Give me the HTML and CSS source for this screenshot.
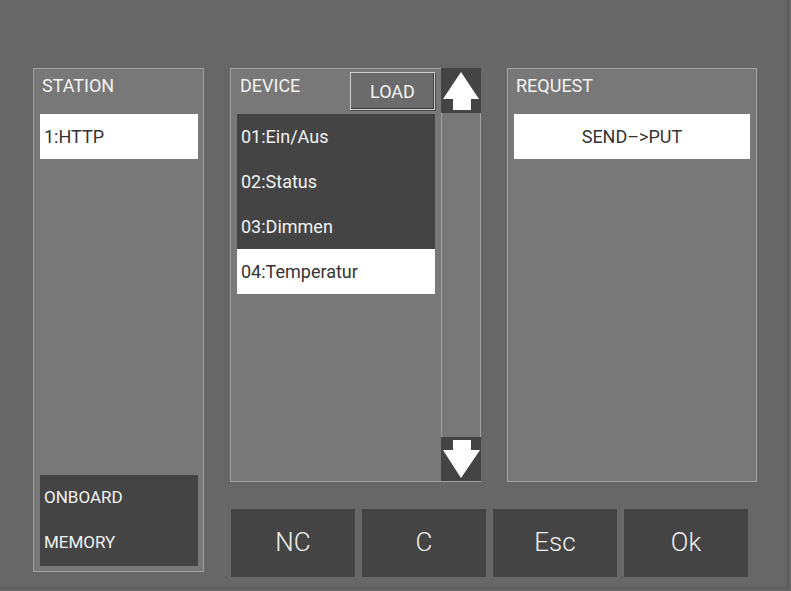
FILE: index.html
```html
<!DOCTYPE html>
<html>
<head>
<meta charset="utf-8">
<link rel="stylesheet" href="styles.css">
</head>
<body>
<div class="screen">
  <div class="station panel">
    <div class="title">STATION</div>
    <div class="item light">1:HTTP</div>
    <div class="spacer"></div>
    <div class="memory">
      <div class="mem-line">ONBOARD</div>
      <div class="mem-line">MEMORY</div>
    </div>
  </div>
  <div class="right">
    <div class="panels">
      <div class="device">
        <div class="dev-main">
          <div class="dev-head">
            <div class="title">DEVICE</div>
            <div class="load">LOAD</div>
          </div>
          <div class="list">
            <div class="item dark">01:Ein/Aus</div>
            <div class="item dark">02:Status</div>
            <div class="item dark">03:Dimmen</div>
            <div class="item light">04:Temperatur</div>
          </div>
        </div>
        <div class="scroll">
          <div class="arrow up">
            <svg width="40" height="45" viewBox="0 0 40 45"><polygon points="20,4 38,31 30,31 30,42 12,42 12,31 2,31" fill="#fff"/></svg>
          </div>
          <div class="track"></div>
          <div class="arrow down">
            <svg width="40" height="44" viewBox="0 0 40 44"><polygon points="12,3 30,3 30,13 39,13 20,41 2,13 12,13" fill="#fff"/></svg>
          </div>
        </div>
      </div>
      <div class="request panel">
        <div class="title">REQUEST</div>
        <div class="item light center">SEND–&gt;PUT</div>
      </div>
    </div>
    <div class="buttons">
      <div class="btn">NC</div>
      <div class="btn">C</div>
      <div class="btn">Esc</div>
      <div class="btn">Ok</div>
    </div>
  </div>
</div>
</body>
</html>
```

FILE: styles.css
```css
* { box-sizing: border-box; }
html, body { margin: 0; padding: 0; }
body {
  background: #676767;
  font-family: Roboto, "Liberation Sans", sans-serif;
  color: #f2f2f2;
  width: 791px;
  height: 591px;
  overflow: hidden;
}
.screen {
  width: 789px;
  height: 589px;
  border-right: 2px solid #5d5d5d;
  border-bottom: 2px solid #5d5d5d;
  padding: 68px 0 0 33px;
  display: flex;
  gap: 26px;
}
.panel {
  background: #787878;
  border: 1px solid #a2a2a2;
}
.title {
  font-size: 18px;
  line-height: 22px;
  color: #f4f4f4;
}
.station {
  width: 171px;
  height: 504px;
  display: flex;
  flex-direction: column;
  padding: 6px 5px 5px 6px;
}
.station .title { padding-left: 2px; margin-bottom: 17px; }
.item {
  height: 45px;
  line-height: 45px;
  font-size: 18px;
  padding-left: 4px;
  white-space: nowrap;
}
.item.light { background: #ffffff; color: #333333; }
.item.dark { background: #444444; color: #f2f2f2; }
.item.center { text-align: center; padding-left: 0; }
.spacer { flex: 1; }
.memory {
  background: #444444;
  height: 91px;
  padding-left: 4px;
}
.mem-line {
  font-size: 17px;
  line-height: 45px;
  color: #f2f2f2;
}
.right {
  display: flex;
  flex-direction: column;
}
.panels {
  display: flex;
  gap: 26px;
  height: 414px;
}
.device {
  display: flex;
  width: 251px;
}
.dev-main {
  width: 211px;
  background: #787878;
  border: 1px solid #a2a2a2;
  border-right: none;
  padding: 3px 6px 0 6px;
}
.dev-head {
  display: flex;
  justify-content: space-between;
  align-items: flex-start;
  height: 42px;
}
.dev-head .title { padding-left: 3px; padding-top: 3px; }
.load {
  width: 85px;
  height: 38px;
  margin-right: 0;
  background: #6b6b6b;
  border: 1px solid #cfcfcf;
  box-shadow: inset -1px -1px 0 #3e3e3e, 1px 1px 0 #4a4a4a;
  font-size: 18px;
  line-height: 38px;
  text-align: center;
  color: #f4f4f4;
}
.list { width: 198px; }
.scroll {
  width: 40px;
  display: flex;
  flex-direction: column;
  background: #787878;
  border: 1px solid #a2a2a2;
}
.arrow {
  background: #444444;
  margin: 0 -1px;
  display: flex;
}
.arrow.up { height: 45px; margin-top: -1px; }
.arrow.down { height: 44px; }
.arrow svg { display: block; }
.track { flex: 1; }
.request {
  width: 250px;
  padding: 6px 6px 0 6px;
}
.request .title { padding-left: 2px; margin-bottom: 17px; }
.buttons {
  display: flex;
  gap: 7px;
  margin-top: 27px;
  margin-left: 1px;
}
.btn {
  width: 124px;
  height: 68px;
  background: #444444;
  font-size: 26px;
  font-weight: 300;
  line-height: 66px;
  text-align: center;
  color: #f0f0f0;
}
```
